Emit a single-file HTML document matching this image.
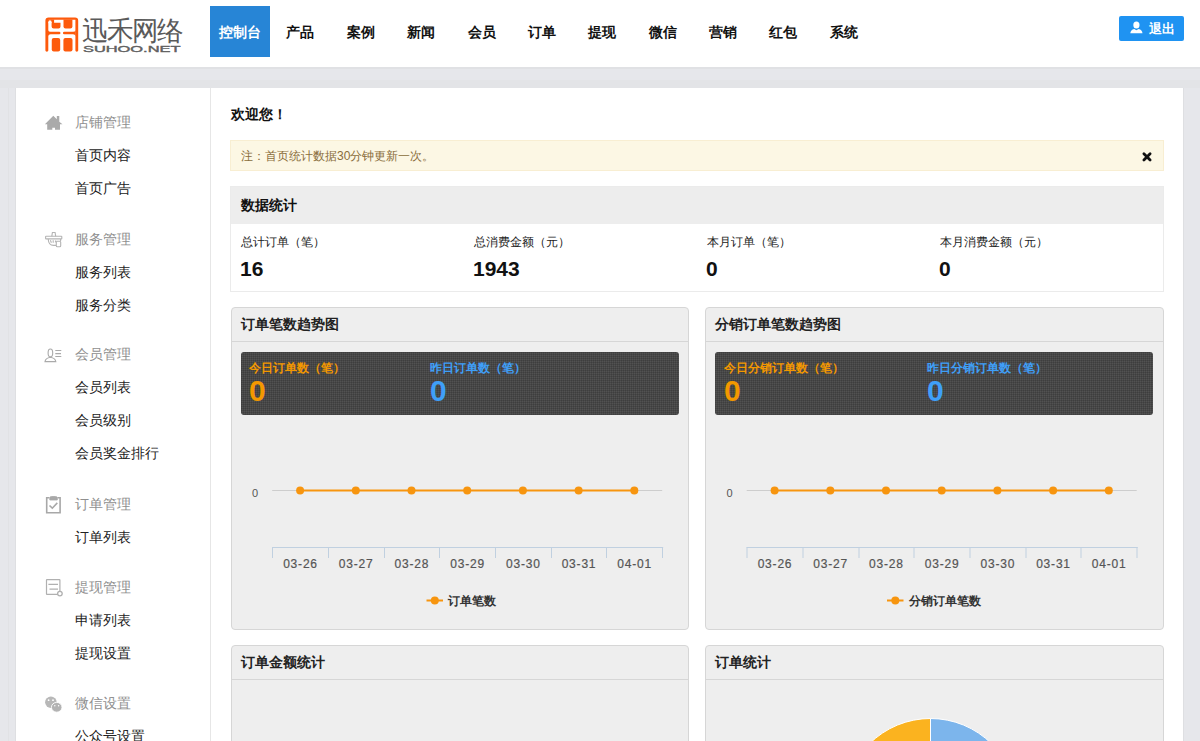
<!DOCTYPE html>
<html><head><meta charset="utf-8">
<style>
*{margin:0;padding:0;box-sizing:border-box}
html,body{width:1200px;height:741px;overflow:hidden;background:#e6e7eb;font-family:"Liberation Sans",sans-serif;color:#333}
.hdr{position:absolute;left:0;top:0;width:1200px;height:67px;background:#fff}
.logo{position:absolute;left:44px;top:17px}
.nav{position:absolute;left:210px;top:6px;height:51px}
.nav span{position:absolute;top:0;width:60px;height:51px;line-height:53px;text-align:center;font-size:14px;font-weight:bold;color:#111}
.nav span.on{background:#2785d6;color:#fff}
.logout{position:absolute;left:1119px;top:16px;width:65px;height:25px;border-radius:2px;background:#1f93f2;color:#fff;font-size:13px;font-weight:bold;line-height:25px}
.wrap{position:absolute;left:16px;top:88px;width:1167px;height:700px;background:#fff}
.side{position:absolute;left:0;top:0;width:195px;height:700px;border-right:1px solid #e6e6e6}
.row{position:absolute;left:59px;height:33px;line-height:33px;font-size:14px;color:#222;white-space:nowrap}
.row.h{color:#8f8f8f}
.ico{position:absolute;left:28px;width:18px;height:18px}
.main{position:absolute;left:214px;top:0}
.t{position:absolute;white-space:nowrap}
.panel{position:absolute;background:#eee;border:1px solid #d6d6d6;border-radius:4px;overflow:hidden}
.ptitle{position:absolute;left:0;top:0;right:0;height:34px;border-bottom:1px solid #d6d6d6;font-size:14px;font-weight:bold;line-height:32px;padding-left:9px;color:#222}
.dark{position:absolute;left:9px;top:43.5px;height:63.5px;background:#525252;border-radius:3px;
 background-image:linear-gradient(90deg,rgba(0,0,0,.13) 1px,transparent 1px),linear-gradient(rgba(0,0,0,.13) 1px,transparent 1px);background-size:2px 2px}
</style></head><body>
<div class="hdr">
  <svg style="position:absolute;left:44.5px;top:16.9px" width="34" height="36" viewBox="0 0 34 36">
    <g fill="#fd5a0c">
    <path d="M0.4 33.6 V3.6 Q0.4 0.4 3.6 0.4 H30 Q33.2 0.4 33.2 3.6 V33.6 Q33.2 34.7 31.8 34.7 Q30.4 34.7 30.4 33.6 V2.8 H3.3 V33.6 Q3.3 34.7 1.85 34.7 Q0.4 34.7 0.4 33.6 Z"/>
    <path d="M6.6 2.5 H9.1 V5.8 H15.5 V9.4 Q15.5 11.4 13.5 11.4 H8.6 Q6.6 11.4 6.6 9.4 Z"/>
    <path d="M18.5 2.5 H27.4 V9.4 Q27.4 11.4 25.4 11.4 H20.5 Q18.5 11.4 18.5 9.4 Z"/>
    <path d="M3 13.2 Q3.6 14.8 5.6 14.8 H14.2 A1.25 1.25 0 0 1 14.2 17.3 H5.6 Q3.6 17.3 3 18.9 Z"/>
    <path d="M30.7 13.2 Q30.1 14.8 28.1 14.8 H19.2 A1.25 1.25 0 0 0 19.2 17.3 H28.1 Q30.1 17.3 30.7 18.9 Z"/>
    <rect x="6.75" y="20.9" width="8.45" height="13.6" rx="2"/>
    <rect x="18.4" y="20.9" width="9.1" height="13.6" rx="2"/>
    <rect x="3" y="2.5" width="3.9" height="2.5"/>
    </g>
    <circle cx="4.95" cy="5" r="1.65" fill="#fff"/>
  </svg>
  <div class="t" style="left:82px;top:13px;font-size:26.5px;font-weight:300;color:#5a5a5a;letter-spacing:-2px;transform:scaleY(1.02)">迅禾网络</div>
  <svg style="position:absolute;left:83px;top:45px" width="100" height="8" viewBox="0 0 100 8">
    <text x="0" y="6.8" font-family="Liberation Sans, sans-serif" font-size="8.2" fill="#5f5f5f" stroke="#5f5f5f" stroke-width="0.35" textLength="97.5" lengthAdjust="spacingAndGlyphs">SUHOO.NET</text>
  </svg>
  <div class="nav">
    <span class="on" style="left:0">控制台</span>
    <span style="left:60.4px">产品</span>
    <span style="left:120.8px">案例</span>
    <span style="left:181.1px">新闻</span>
    <span style="left:241.5px">会员</span>
    <span style="left:301.9px">订单</span>
    <span style="left:362.3px">提现</span>
    <span style="left:422.6px">微信</span>
    <span style="left:483px">营销</span>
    <span style="left:543.4px">红包</span>
    <span style="left:603.8px">系统</span>
  </div>
  <div class="logout"><svg style="position:absolute;left:11px;top:5px" width="13" height="13" viewBox="0 0 13 13"><ellipse cx="6.4" cy="4" rx="3.1" ry="3.6" fill="#fff"/><path d="M0.3 12.2 Q0.6 8.6 4.2 7.9 L6.4 9.2 L8.6 7.9 Q12.2 8.6 12.5 12.2 Z" fill="#fff"/></svg><span style="position:absolute;left:30px;top:0">退出</span></div>
</div>
<div style="position:absolute;left:0;top:67px;width:1200px;height:2px;background:#e0e1e4"></div>
<div style="position:absolute;left:0;top:80px;width:1200px;height:8px;background:#e3e4e7"></div>
<div style="position:absolute;left:15px;top:88px;width:1px;height:653px;background:#dedfe2"></div>
<div style="position:absolute;left:8px;top:88px;width:1px;height:653px;background:#e1e2e5"></div>
<div style="position:absolute;left:1183px;top:88px;width:1px;height:653px;background:#dedfe2"></div>
<div class="wrap">
  <div class="side">
    <div class="row h" style="top:17.5px">店铺管理</div>
    <div class="row" style="top:50.5px">首页内容</div>
    <div class="row" style="top:83.5px">首页广告</div>
    <div class="row h" style="top:134.5px">服务管理</div>
    <div class="row" style="top:167.5px">服务列表</div>
    <div class="row" style="top:200.5px">服务分类</div>
    <div class="row h" style="top:249.5px">会员管理</div>
    <div class="row" style="top:282.5px">会员列表</div>
    <div class="row" style="top:315.5px">会员级别</div>
    <div class="row" style="top:348.5px">会员奖金排行</div>
    <div class="row h" style="top:399.5px">订单管理</div>
    <div class="row" style="top:432.5px">订单列表</div>
    <div class="row h" style="top:482.5px">提现管理</div>
    <div class="row" style="top:515.5px">申请列表</div>
    <div class="row" style="top:548.5px">提现设置</div>
    <div class="row h" style="top:598.5px">微信设置</div>
    <div class="row" style="top:632px">公众号设置</div>
  </div>
</div>
<svg style="position:absolute;left:0;top:0" width="210" height="741">
<path d="M44.9 124.2 L53.3 115.8 L56.8 119.3 V116 H59.3 V121.8 L62.5 124.2 H60 V129.8 H55 V127.8 H52.3 V129.8 H47.2 V124.2 Z" fill="#aaa"/>
<g fill="none" stroke="#b4b4b4" stroke-width="1.1">
<path d="M51.8 236.3 L52.4 232.5 H55.1 L55.7 236.3"/>
<rect x="45.6" y="236.3" width="16.2" height="2.6" rx="0.5"/>
<path d="M48.2 239 Q48.6 245.4 53.5 245.4 H56 M60.6 239 V241"/>
<rect x="56.3" y="241.2" width="4.4" height="5.6" rx="1"/>
<path d="M50.4 240.3 L51.4 242.8 M53.2 240.3 V242.8 M55.9 240.3 L55.3 242.4"/>
</g>
<g fill="none" stroke="#aaa" stroke-width="1.1">
<ellipse cx="50.4" cy="352.9" rx="2.3" ry="3.9"/>
<path d="M45 361.6 Q45.5 358 50.4 357.2 Q55.3 358 55.8 361.6 Z"/>
<path d="M55.3 350.5 H61.3 M55.3 353.6 H61 M55.3 356.5 H61.3"/>
</g>
<g fill="none" stroke="#a8a8a8" stroke-width="1.6">
<path d="M49.3 497.8 H46.7 V512.7 H60.1 V497.8 H57.6"/>
<path d="M49.8 500 V497.3 Q50.5 496.5 51.5 496.5 H55.5 Q56.5 496.5 57.3 497.3 V500 Z" fill="#a8a8a8" stroke-width="0.8"/>
<path d="M49.5 505.5 L52.3 508.2 L57.3 502.9"/>
</g>
<g fill="none" stroke="#b0b0b0" stroke-width="1.2">
<rect x="46.5" y="579.6" width="13.4" height="14.8" rx="0.5"/>
<path d="M48.4 584.3 H58 M49.5 589.2 H58"/>
</g>
<circle cx="59.9" cy="593.6" r="2.3" fill="#fff" stroke="#b0b0b0" stroke-width="1.3"/>
<ellipse cx="50.9" cy="702.3" rx="5.8" ry="5.7" fill="#b8b8b8"/>
<ellipse cx="56.7" cy="707.3" rx="5.3" ry="4.9" fill="#b3b3b3" stroke="#fff" stroke-width="0.9"/>
<circle cx="48.6" cy="700.2" r="0.9" fill="#fff"/><circle cx="53" cy="700.2" r="0.9" fill="#fff"/>
<circle cx="54.8" cy="705.8" r="0.7" fill="#fff"/><circle cx="58.6" cy="705.8" r="0.7" fill="#fff"/>
</svg>
<!-- main content absolute to page -->
<div class="t" style="left:231px;top:106px;font-size:14px;font-weight:bold;color:#111">欢迎您！</div>
<div style="position:absolute;left:230px;top:140px;width:934px;height:31px;background:#fcf7e4;border:1px solid #f8eed2"></div>
<div class="t" style="left:241px;top:148px;font-size:12px;color:#8a6d3b">注：首页统计数据30分钟更新一次。</div>
<svg style="position:absolute;left:1140px;top:150px" width="14" height="14"><path d="M3.9 3.8 L10.1 10 M10.1 3.8 L3.9 10" stroke="#111" stroke-width="2.8" stroke-linecap="round"/></svg>

<div style="position:absolute;left:230px;top:186px;width:934px;height:106px;border:1px solid #ebebeb;background:#fff">
  <div style="position:absolute;left:0;top:0;width:932px;height:37px;background:#ededed"></div>
</div>
<div class="t" style="left:241px;top:197px;font-size:14px;font-weight:bold;color:#111">数据统计</div>
<div class="t" style="left:241px;top:234px;font-size:12px;color:#222">总计订单（笔）</div>
<div class="t" style="left:474px;top:234px;font-size:12px;color:#222">总消费金额（元）</div>
<div class="t" style="left:707px;top:234px;font-size:12px;color:#222">本月订单（笔）</div>
<div class="t" style="left:940px;top:234px;font-size:12px;color:#222">本月消费金额（元）</div>
<div class="t" style="left:240px;top:257px;font-size:21px;font-weight:bold;color:#111">16</div>
<div class="t" style="left:473px;top:257px;font-size:21px;font-weight:bold;color:#111">1943</div>
<div class="t" style="left:706px;top:257px;font-size:21px;font-weight:bold;color:#111">0</div>
<div class="t" style="left:939px;top:257px;font-size:21px;font-weight:bold;color:#111">0</div>

<div class="panel" style="left:231px;top:307px;width:458px;height:323px">
  <div class="ptitle">订单笔数趋势图</div>
  <div class="dark" style="width:438px"></div>
</div>
<div class="panel" style="left:705px;top:307px;width:459px;height:323px">
  <div class="ptitle">分销订单笔数趋势图</div>
  <div class="dark" style="width:438px"></div>
</div>
<div class="panel" style="left:231px;top:645px;width:458px;height:200px">
  <div class="ptitle">订单金额统计</div>
</div>
<div class="panel" style="left:705px;top:645px;width:459px;height:200px">
  <div class="ptitle">订单统计</div>
</div>
<svg style="position:absolute;left:0;top:0" width="1200" height="741" font-family="Liberation Sans, sans-serif">
<g>
<text x="255" y="497" font-size="11" fill="#555" text-anchor="middle">0</text>
<line x1="272.2" y1="490.5" x2="662.2" y2="490.5" stroke="#cdcdcd"/>
<line x1="272.2" y1="547.5" x2="663.2" y2="547.5" stroke="#c0d0e0"/>
<line x1="272.5" y1="547" x2="272.5" y2="558" stroke="#c0d0e0"/>
<line x1="328.5" y1="547" x2="328.5" y2="558" stroke="#c0d0e0"/>
<line x1="384.5" y1="547" x2="384.5" y2="558" stroke="#c0d0e0"/>
<line x1="439.5" y1="547" x2="439.5" y2="558" stroke="#c0d0e0"/>
<line x1="495.5" y1="547" x2="495.5" y2="558" stroke="#c0d0e0"/>
<line x1="551.5" y1="547" x2="551.5" y2="558" stroke="#c0d0e0"/>
<line x1="606.5" y1="547" x2="606.5" y2="558" stroke="#c0d0e0"/>
<line x1="662.5" y1="547" x2="662.5" y2="558" stroke="#c0d0e0"/>
<text x="300.5" y="568" font-size="12" letter-spacing="0.8" fill="#555" stroke="#555" stroke-width="0.2" text-anchor="middle">03-26</text>
<text x="356.2" y="568" font-size="12" letter-spacing="0.8" fill="#555" stroke="#555" stroke-width="0.2" text-anchor="middle">03-27</text>
<text x="411.9" y="568" font-size="12" letter-spacing="0.8" fill="#555" stroke="#555" stroke-width="0.2" text-anchor="middle">03-28</text>
<text x="467.6" y="568" font-size="12" letter-spacing="0.8" fill="#555" stroke="#555" stroke-width="0.2" text-anchor="middle">03-29</text>
<text x="523.3" y="568" font-size="12" letter-spacing="0.8" fill="#555" stroke="#555" stroke-width="0.2" text-anchor="middle">03-30</text>
<text x="579.0" y="568" font-size="12" letter-spacing="0.8" fill="#555" stroke="#555" stroke-width="0.2" text-anchor="middle">03-31</text>
<text x="634.7" y="568" font-size="12" letter-spacing="0.8" fill="#555" stroke="#555" stroke-width="0.2" text-anchor="middle">04-01</text>
<line x1="300.1" y1="490.5" x2="634.3" y2="490.5" stroke="#f7950f" stroke-width="2"/>
<circle cx="300.1" cy="490.5" r="4" fill="#f7950f"/>
<circle cx="355.8" cy="490.5" r="4" fill="#f7950f"/>
<circle cx="411.5" cy="490.5" r="4" fill="#f7950f"/>
<circle cx="467.2" cy="490.5" r="4" fill="#f7950f"/>
<circle cx="522.9" cy="490.5" r="4" fill="#f7950f"/>
<circle cx="578.6" cy="490.5" r="4" fill="#f7950f"/>
<circle cx="634.3" cy="490.5" r="4" fill="#f7950f"/>
<line x1="426.5" y1="600.5" x2="443" y2="600.5" stroke="#f7950f" stroke-width="2"/>
<circle cx="434.8" cy="600.5" r="4" fill="#f7950f"/>
<text x="448" y="605" font-size="12" font-weight="bold" fill="#333">订单笔数</text>
</g>
<g transform="translate(474.5,0)">
<text x="255" y="497" font-size="11" fill="#555" text-anchor="middle">0</text>
<line x1="272.2" y1="490.5" x2="662.2" y2="490.5" stroke="#cdcdcd"/>
<line x1="272.2" y1="547.5" x2="663.2" y2="547.5" stroke="#c0d0e0"/>
<line x1="272.5" y1="547" x2="272.5" y2="558" stroke="#c0d0e0"/>
<line x1="328.5" y1="547" x2="328.5" y2="558" stroke="#c0d0e0"/>
<line x1="384.5" y1="547" x2="384.5" y2="558" stroke="#c0d0e0"/>
<line x1="439.5" y1="547" x2="439.5" y2="558" stroke="#c0d0e0"/>
<line x1="495.5" y1="547" x2="495.5" y2="558" stroke="#c0d0e0"/>
<line x1="551.5" y1="547" x2="551.5" y2="558" stroke="#c0d0e0"/>
<line x1="606.5" y1="547" x2="606.5" y2="558" stroke="#c0d0e0"/>
<line x1="662.5" y1="547" x2="662.5" y2="558" stroke="#c0d0e0"/>
<text x="300.5" y="568" font-size="12" letter-spacing="0.8" fill="#555" stroke="#555" stroke-width="0.2" text-anchor="middle">03-26</text>
<text x="356.2" y="568" font-size="12" letter-spacing="0.8" fill="#555" stroke="#555" stroke-width="0.2" text-anchor="middle">03-27</text>
<text x="411.9" y="568" font-size="12" letter-spacing="0.8" fill="#555" stroke="#555" stroke-width="0.2" text-anchor="middle">03-28</text>
<text x="467.6" y="568" font-size="12" letter-spacing="0.8" fill="#555" stroke="#555" stroke-width="0.2" text-anchor="middle">03-29</text>
<text x="523.3" y="568" font-size="12" letter-spacing="0.8" fill="#555" stroke="#555" stroke-width="0.2" text-anchor="middle">03-30</text>
<text x="579.0" y="568" font-size="12" letter-spacing="0.8" fill="#555" stroke="#555" stroke-width="0.2" text-anchor="middle">03-31</text>
<text x="634.7" y="568" font-size="12" letter-spacing="0.8" fill="#555" stroke="#555" stroke-width="0.2" text-anchor="middle">04-01</text>
<line x1="300.1" y1="490.5" x2="634.3" y2="490.5" stroke="#f7950f" stroke-width="2"/>
<circle cx="300.1" cy="490.5" r="4" fill="#f7950f"/>
<circle cx="355.8" cy="490.5" r="4" fill="#f7950f"/>
<circle cx="411.5" cy="490.5" r="4" fill="#f7950f"/>
<circle cx="467.2" cy="490.5" r="4" fill="#f7950f"/>
<circle cx="522.9" cy="490.5" r="4" fill="#f7950f"/>
<circle cx="578.6" cy="490.5" r="4" fill="#f7950f"/>
<circle cx="634.3" cy="490.5" r="4" fill="#f7950f"/>
</g>
<line x1="887" y1="600.5" x2="903.5" y2="600.5" stroke="#f7950f" stroke-width="2"/>
<circle cx="895.3" cy="600.5" r="4" fill="#f7950f"/>
<text x="909" y="605" font-size="12" font-weight="bold" fill="#333">分销订单笔数</text>
<path d="M930.5 805 L930.5 718.5 A86.5 86.5 0 0 1 1017 805 Z" fill="#7cb5ec" stroke="#fff" stroke-width="1"/>
<path d="M930.5 805 L930.5 718.5 A86.5 86.5 0 0 0 844 805 Z" fill="#fbb31f" stroke="#fff" stroke-width="1"/>
</svg>
<div class="t" style="left:249px;top:360px;font-size:12px;font-weight:bold;color:#f39800">今日订单数（笔）</div>
<div class="t" style="left:249px;top:374px;font-size:30px;font-weight:bold;color:#f39800">0</div>
<div class="t" style="left:430px;top:360px;font-size:12px;font-weight:bold;color:#3f9ff8">昨日订单数（笔）</div>
<div class="t" style="left:430px;top:374px;font-size:30px;font-weight:bold;color:#3f9ff8">0</div>
<div class="t" style="left:724px;top:360px;font-size:12px;font-weight:bold;color:#f39800">今日分销订单数（笔）</div>
<div class="t" style="left:724px;top:374px;font-size:30px;font-weight:bold;color:#f39800">0</div>
<div class="t" style="left:927px;top:360px;font-size:12px;font-weight:bold;color:#3f9ff8">昨日分销订单数（笔）</div>
<div class="t" style="left:927px;top:374px;font-size:30px;font-weight:bold;color:#3f9ff8">0</div>
</body></html>
